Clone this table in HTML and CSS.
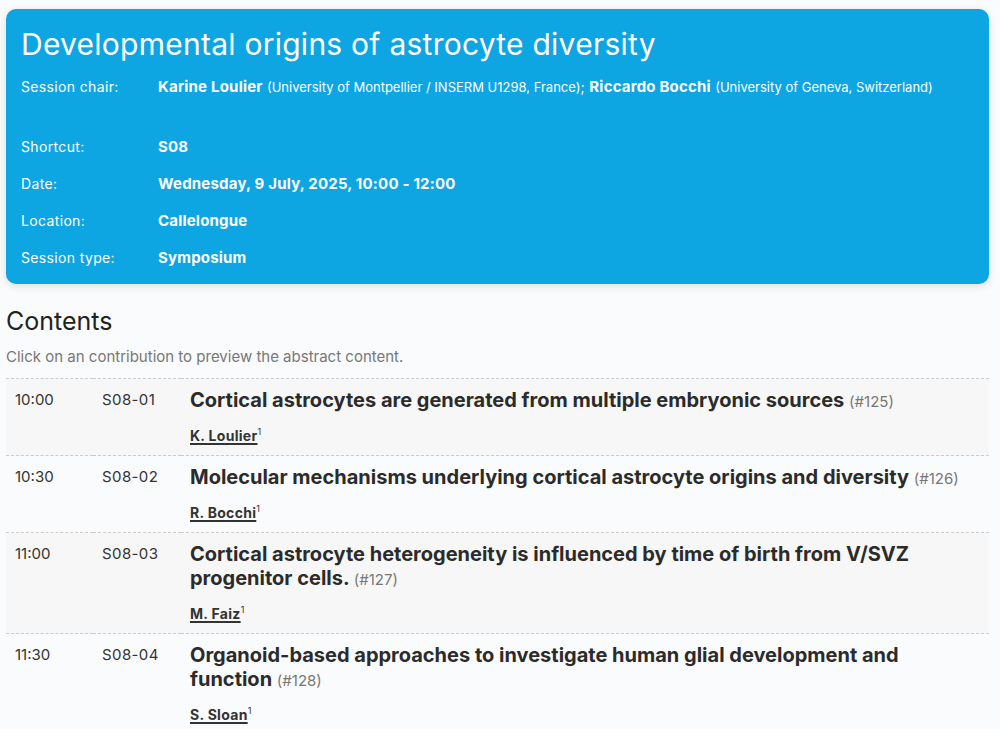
FILE: index.html
```html
<!DOCTYPE html>
<html lang="en">
<head>
  <meta charset="UTF-8" />
  <meta name="viewport" content="width=device-width, initial-scale=1.0"/>
  <title>S08 - Developmental origins of astrocyte diversity</title>
  <link rel="stylesheet" href="styles.css">
</head>
<body>
  <div class="page">
    <div class="session-box">
      <h1>Developmental origins of astrocyte diversity</h1>
      <table class="session-info">
        <tr>
          <td class="label">Session chair:</td>
          <td class="value">
            <b>Karine Loulier</b> <span class="affil">(University of Montpellier / INSERM U1298, France)</span>;
            <b>Riccardo Bocchi</b> <span class="affil">(University of Geneva, Switzerland)</span>
          </td>
        </tr>
        <tr class="spacer"><td colspan="2"></td></tr>
        <tr>
          <td class="label">Shortcut:</td>
          <td class="value"><b>S08</b></td>
        </tr>
        <tr>
          <td class="label">Date:</td>
          <td class="value"><b>Wednesday, 9 July, 2025, 10:00 - 12:00</b></td>
        </tr>
        <tr>
          <td class="label">Location:</td>
          <td class="value"><b>Callelongue</b></td>
        </tr>
        <tr>
          <td class="label">Session type:</td>
          <td class="value"><b>Symposium</b></td>
        </tr>
      </table>
    </div>

    <h2>Contents</h2>
    <p class="hint">Click on an contribution to preview the abstract content.</p>

    <table class="contents">
      <tr class="odd">
        <td class="time">10:00</td>
        <td class="code">S08-01</td>
        <td class="paper">
          <div class="paper-title">Cortical astrocytes are generated from multiple embryonic sources <span class="num">(#125)</span></div>
          <div class="authors"><a href="#">K. Loulier</a><sup>1</sup></div>
        </td>
      </tr>
      <tr>
        <td class="time">10:30</td>
        <td class="code">S08-02</td>
        <td class="paper">
          <div class="paper-title">Molecular mechanisms underlying cortical astrocyte origins and diversity <span class="num">(#126)</span></div>
          <div class="authors"><a href="#">R. Bocchi</a><sup>1</sup></div>
        </td>
      </tr>
      <tr class="odd">
        <td class="time">11:00</td>
        <td class="code">S08-03</td>
        <td class="paper">
          <div class="paper-title">Cortical astrocyte heterogeneity is influenced by time of birth from V/SVZ progenitor cells. <span class="num">(#127)</span></div>
          <div class="authors"><a href="#">M. Faiz</a><sup>1</sup></div>
        </td>
      </tr>
      <tr>
        <td class="time">11:30</td>
        <td class="code">S08-04</td>
        <td class="paper">
          <div class="paper-title">Organoid-based approaches to investigate human glial development and function <span class="num">(#128)</span></div>
          <div class="authors"><a href="#">S. Sloan</a><sup>1</sup></div>
        </td>
      </tr>
    </table>
  </div>
</body>
</html>
```

FILE: styles.css
```css
body {
  margin: 0;
  font-family: Inter, 'Noto Sans', sans-serif;
  background: #fafbfd;
  color: #333;
}

.page {
  width: 983px;
  padding: 9px 0 0 6px;
}

.session-box {
  background: #0ea5e3;
  color: #fff;
  border-radius: 10px;
  padding: 17px 15px 8px;
  box-shadow: 0 2px 8px rgba(0, 0, 0, 0.12);
}

.session-box h1 {
  margin: 0 0 6px;
  font-size: 30px;
  font-weight: 400;
  line-height: 36px;
  letter-spacing: 0.25px;
}

.session-info {
  border-collapse: collapse;
  font-size: 14px;
  letter-spacing: 0.35px;
}

.session-info td {
  padding: 8px 0;
  line-height: 21px;
  vertical-align: top;
}

.session-info .label {
  width: 137px;
}

.session-info b {
  font-size: 15px;
  letter-spacing: 0.2px;
}

.session-info .affil {
  font-size: 13px;
  letter-spacing: 0;
}

.session-info .spacer td {
  padding: 0;
  height: 22px;
}

h2 {
  margin: 24px 0 0;
  font-size: 25px;
  font-weight: 400;
  line-height: 26px;
  color: #222;
}

.hint {
  margin: 14px 0 0;
  font-size: 15px;
  line-height: 18px;
  color: #777;
}

.contents {
  width: 100%;
  margin-top: 12px;
  border-collapse: collapse;
  font-size: 15px;
}

.contents tr {
  border-top: 1px dashed #ccc;
}

.contents tr.odd {
  background: #f7f7f7;
}

.contents td {
  vertical-align: top;
  padding: 9px 9px 10px;
}

.contents .time {
  width: 69px;
  line-height: 24px;
}

.contents .code {
  width: 70px;
  line-height: 24px;
  letter-spacing: 0.4px;
}

.paper-title {
  font-size: 20px;
  font-weight: 700;
  line-height: 24px;
  color: #2b2b2b;
}

.paper-title .num {
  font-size: 15px;
  font-weight: 400;
  line-height: 1;
  color: #777;
}

.authors {
  margin-top: 15px;
  font-size: 14px;
  line-height: 18px;
  letter-spacing: 0.3px;
}

.authors a {
  color: #333;
  font-weight: 700;
  text-decoration: underline;
  text-decoration-thickness: 1.5px;
  text-underline-offset: 2px;
}

.authors sup {
  font-size: 9px;
  line-height: 0;
}
```
